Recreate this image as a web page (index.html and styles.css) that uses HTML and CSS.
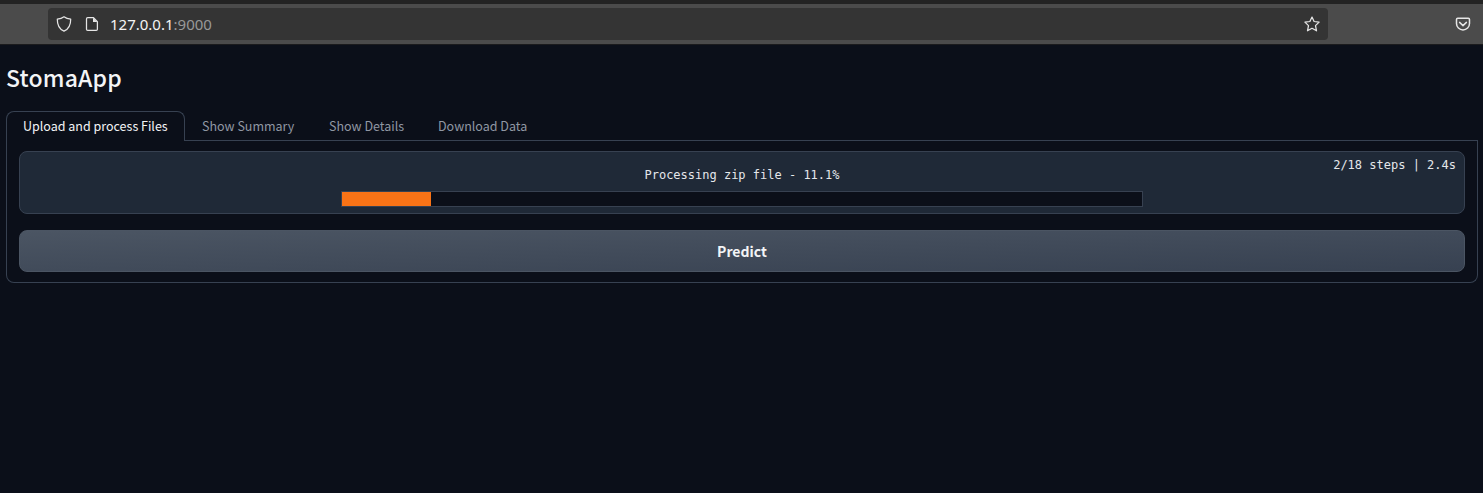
FILE: index.html
```html
<!DOCTYPE html>
<html lang="en">
<head>
<meta charset="utf-8">
<title>StomaApp</title>
<link rel="stylesheet" href="styles.css">
</head>
<body>
<header class="toolbar">
  <div class="address">
    <svg class="icon" viewBox="0 0 16 16"><path d="M8 .8 C6.4 2 3.8 2.9 1.3 3.1 C1.2 8.8 2.8 13.1 8 15.2 C13.2 13.1 14.8 8.8 14.7 3.1 C12.2 2.9 9.6 2 8 .8Z"/></svg>
    <svg class="icon page-icon" viewBox="0 0 16 16"><path d="M3.7 1.7H9.5L13.4 5.6V13.2Q13.4 14.4 12.2 14.4H3.7Q2.5 14.4 2.5 13.2V2.9Q2.5 1.7 3.7 1.7Z"/><path class="solid" d="M9 1.7V6H13.4Z"/></svg>
    <span class="url">127.0.0.1<span class="port">:9000</span></span>
    <svg class="icon star" viewBox="0 0 16 16"><path d="M8 1.1 L10.1 5.5 L15.1 6.1 L11.5 9.6 L12.5 14.8 L8 12.3 L3.5 14.8 L4.5 9.6 L.9 6.1 L5.9 5.5Z"/></svg>
  </div>
  <svg class="icon pocket" viewBox="0 0 16 16"><path d="M2.7 2.3H13.3Q14.5 2.3 14.5 3.5V7.4A6.5 6.5 0 0 1 1.5 7.4V3.5Q1.5 2.3 2.7 2.3Z"/><path d="M4.6 6.4L8 9.6L11.4 6.4"/></svg>
</header>
<main class="app">
  <h1 class="title">StomaApp</h1>
  <nav class="tabs">
    <button class="tab tab-active">Upload and process Files</button>
    <button class="tab tab-summary">Show Summary</button>
    <button class="tab tab-details">Show Details</button>
    <button class="tab tab-download">Download Data</button>
  </nav>
  <section class="panel">
    <div class="status">
      <div class="meta">2/18 steps | 2.4s</div>
      <div class="label">Processing zip file - 11.1%</div>
      <div class="track"><div class="fill" style="width:11.1%"></div></div>
    </div>
    <button class="predict">Predict</button>
  </section>
</main>
</body>
</html>
```
FILE: styles.css
```css
* { box-sizing: border-box; }
body {
  margin: 0;
  min-height: 493px;
  background: #0b0f19;
  color: #f3f4f6;
  font-family: "Noto Sans CJK SC", "Open Sans", sans-serif;
}
button { margin: 0; font: inherit; color: inherit; }
.toolbar {
  display: flex;
  align-items: center;
  height: 45px;
  padding: 0 12px 0 48px;
  background: #4b4b4b;
  border-top: 4px solid #232323;
  border-bottom: 1px solid #1b1b1d;
}
.address {
  display: flex;
  align-items: center;
  width: 1280px;
  height: 32px;
  padding: 0 8px;
  border-radius: 4px;
  background: #343434;
}
.icon {
  width: 16px;
  height: 16px;
  flex: none;
  fill: none;
  stroke: #e6e6e6;
  stroke-width: 1.25;
  stroke-linejoin: round;
  stroke-linecap: round;
}
.solid { fill: #e6e6e6; stroke: none; }
.page-icon { margin-left: 12px; }
.url {
  margin-left: 10px;
  font: 15px/20px "Noto Sans", sans-serif;
  color: #f4f4f4;
}
.port { color: #999; }
.star, .pocket { margin-left: auto; }
.pocket { stroke-width: 1.5; }
.app { padding: 15px 5px 0 6px; }
.title {
  margin: 0;
  height: 51px;
  font-size: 23px;
  line-height: 34px;
  font-weight: 500;
  letter-spacing: 0.2px;
}
.tabs {
  display: flex;
  height: 30px;
}
.tab {
  padding: 0 0 0 17px;
  border: 0;
  border-bottom: 1px solid #374151;
  background: none;
  color: #9097a3;
  font-size: 12.5px;
  line-height: 29px;
  text-align: left;
  white-space: nowrap;
}
.tab-active {
  width: 179px;
  padding: 0 0 1px 16px;
  border: 1px solid #374151;
  border-bottom: 0;
  border-radius: 8px 8px 0 0;
  color: #f3f4f6;
  line-height: 28px;
}
.tab-summary { width: 127px; }
.tab-details { width: 109px; }
.tab-download { flex: 1; }
.panel {
  display: flex;
  flex-direction: column;
  gap: 16px;
  padding: 10px 12px;
  height: 142px;
  border: 1px solid #374151;
  border-top: 0;
  border-radius: 0 0 8px 8px;
}
.status {
  position: relative;
  display: flex;
  flex-direction: column;
  align-items: center;
  height: 63px;
  padding-top: 15px;
  border: 1px solid #374151;
  border-radius: 8px;
  background: #1f2937;
  color: #e5e7eb;
  font: 12px/16px "DejaVu Sans Mono", monospace;
}
.meta {
  position: absolute;
  top: 5px;
  right: 8px;
}
.label { height: 24px; }
.track {
  width: 802px;
  height: 16px;
  border: 1px solid #374151;
  background: #0b0f19;
}
.fill { height: 100%; background: #f97316; }
.predict {
  height: 42px;
  padding: 0;
  border: 1px solid #4b5563;
  border-radius: 8px;
  background: linear-gradient(to bottom right, #4b5563, #374151);
  font-size: 14px;
  line-height: 40px;
  font-weight: 700;
}
```
